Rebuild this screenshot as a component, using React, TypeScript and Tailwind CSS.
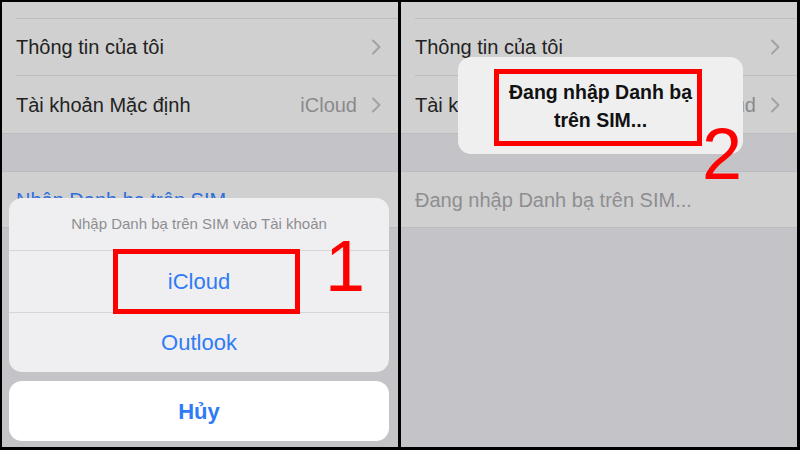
import type { ReactNode } from "react"

const font = { fontFamily: '"Liberation Sans", Arial, sans-serif' }

function Chevron() {
  return (
    <svg width="10" height="16" viewBox="0 0 10 16" className="shrink-0">
      <polyline points="2,1.5 8.5,8 2,14.5" fill="none" stroke="#a2a2a4" strokeWidth="2" strokeLinecap="round" strokeLinejoin="round" />
    </svg>
  )
}

function Row({ label, value, chevron = true, className = "text-[#222]", height = "h-[56px]" }: { label: ReactNode; value?: string; chevron?: boolean; className?: string; height?: string }) {
  return (
    <div className={`flex items-center pl-[14px] pr-[17px] ${height}`}>
      <span className={`flex-1 whitespace-nowrap text-[20px] ${className}`}>{label}</span>
      {value && <span className="mr-[14px] text-[20px] text-[#8a8a8c]">{value}</span>}
      {chevron && <Chevron />}
    </div>
  )
}

function SettingsList({ simLabel, simClass }: { simLabel: string; simClass: string }) {
  return (
    <div className="flex h-full flex-col">
      <div className="bg-[#d0d0d0]">
        <div className="h-[16px]" />
        <div className="ml-[14px] h-px bg-[#bdbdbe]" />
        <Row label="Thông tin của tôi" />
        <div className="ml-[14px] h-px bg-[#bdbdbe]" />
        <Row label="Tài khoản Mặc định" value="iCloud" height="h-[57px]" />
      </div>
      <div className="h-[38px] border-t border-[#bcbcbe] bg-[#c4c3c8]" />
      <div className="border-y border-[#bcbcbe] bg-[#d0d0d0]">
        <Row label={simLabel} chevron={false} className={simClass} height="h-[55px]" />
      </div>
      <div className="flex-1 bg-[#c4c3c8]" />
    </div>
  )
}

export default function App() {
  return (
    <div style={font} className="flex h-[450px] w-[800px] gap-[3px] overflow-hidden bg-black pb-[3px] pl-[2px] pr-[3px] pt-[2px]">
      {/* left: action sheet */}
      <div className="relative h-full w-[396px] overflow-hidden">
        <SettingsList simLabel="Nhập Danh bạ trên SIM" simClass="text-[#2f6fd8]" />
        <div className="absolute bottom-[6px] left-[7px] right-[9px] flex flex-col gap-[9px]">
          <div className="overflow-hidden rounded-[13px] bg-[#efeff1]">
            <div className="flex h-[52px] items-center justify-center text-[15px] text-[#8e8e92]">
              Nhập Danh bạ trên SIM vào Tài khoản
            </div>
            <div className="h-px bg-[#d6d6d8]" />
            <div className="flex h-[61px] items-center justify-center text-[22px] text-[#2f7bf5]">iCloud</div>
            <div className="h-px bg-[#d6d6d8]" />
            <div className="flex h-[59px] items-center justify-center text-[22px] text-[#2f7bf5]">Outlook</div>
          </div>
          <div className="flex h-[60px] items-center justify-center rounded-[13px] bg-white text-[22px] font-bold text-[#2f7bf5]">
            Hủy
          </div>
        </div>
        <div className="absolute left-[111px] top-[247px] h-[65px] w-[187px] border-[5px] border-[#ff0000]" />
        <div className="absolute left-[323px] top-[228px] text-[72px] leading-none text-[#ff0000]">1</div>
      </div>

      {/* right: progress hud */}
      <div className="relative h-full w-[396px] overflow-hidden">
        <SettingsList simLabel="Đang nhập Danh bạ trên SIM..." simClass="text-[#8e8e90]" />
        <div className="absolute left-[57px] top-[55px] flex h-[97px] w-[285px] flex-col items-center justify-center rounded-[13px] bg-[#efeff0] text-center text-[19.5px] font-bold leading-[28px] text-[#111]">
          <span>Đang nhập Danh bạ</span>
          <span>trên SIM...</span>
        </div>
        <div className="absolute left-[93px] top-[67px] h-[77px] w-[208px] border-[5px] border-[#ff0000]" />
        <div className="absolute left-[301px] top-[116px] text-[72px] leading-none text-[#ff0000]">2</div>
      </div>
    </div>
  )
}
